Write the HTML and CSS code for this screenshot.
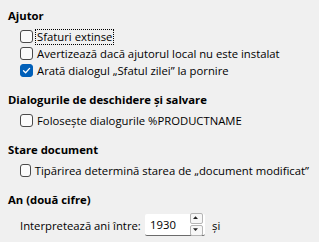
FILE: index.html
```html
<!DOCTYPE html>
<html lang="ro">
<head>
  <meta charset="UTF-8" />
  <title>Opțiuni - General</title>
  <link rel="stylesheet" href="styles.css">
</head>
<body>

  <section class="group">
    <h2 class="group-title">Ajutor</h2>
    <div class="options">
      <label class="check focused"><span class="box"></span><span class="text">Sfaturi extinse</span></label>
      <label class="check"><span class="box"></span><span class="text">Avertizează dacă ajutorul local nu este instalat</span></label>
      <label class="check"><span class="box checked"><svg viewBox="0 0 13 13" width="13" height="13"><path d="M3.5 6.8 L5.6 8.8 L9.6 4.4" fill="none" stroke="#fff" stroke-width="1.3" stroke-linecap="round" stroke-linejoin="round"/></svg></span><span class="text">Arată dialogul „Sfatul zilei” la pornire</span></label>
    </div>
  </section>

  <section class="group">
    <h2 class="group-title">Dialogurile de deschidere și salvare</h2>
    <div class="options">
      <label class="check"><span class="box"></span><span class="text">Folosește dialogurile %PRODUCTNAME</span></label>
    </div>
  </section>

  <section class="group">
    <h2 class="group-title">Stare document</h2>
    <div class="options">
      <label class="check"><span class="box"></span><span class="text">Tipărirea determină starea de „document modificat”</span></label>
    </div>
  </section>

  <section class="group">
    <h2 class="group-title">An (două cifre)</h2>
    <div class="year-row">
      <span class="year-label">Interpretează ani între:</span>
      <div class="spin">
        <span class="spin-value">1930</span>
        <div class="spin-buttons">
          <span class="spin-btn">
            <svg viewBox="0 0 11 9" width="11" height="9"><path d="M3 6 L5.5 3.2 L8 6 Z" fill="#222"/></svg>
          </span>
          <span class="spin-btn">
            <svg viewBox="0 0 11 9" width="11" height="9"><path d="M3 3.2 L5.5 6 L8 3.2 Z" fill="#222"/></svg>
          </span>
        </div>
      </div>
      <span class="year-and">și</span>
    </div>
  </section>

</body>
</html>
```

FILE: styles.css
```css
body, html {
  margin: 0;
  padding: 0;
  background: #f0f0f0;
  color: #000;
  font-family: "Open Sans", "Noto Sans", sans-serif;
  font-size: 11.3px;
  white-space: nowrap;
}

body {
  padding: 8px 8px 0 8px;
}

.group {
  margin-bottom: 13px;
}

.group-title {
  margin: 0;
  font-size: 11.3px;
  font-weight: bold;
  line-height: 16px;
}

.options {
  margin-top: 4px;
  padding-left: 12px;
  display: flex;
  flex-direction: column;
}

.check {
  display: flex;
  align-items: center;
  height: 17px;
  gap: 2px;
}

.box {
  width: 11px;
  height: 11px;
  border: 1px solid #4a4a4a;
  border-radius: 3px;
  background: #fbfbfb;
  display: flex;
}

.box.checked {
  background: #005fb8;
  border-color: #005fb8;
}

.box svg {
  margin: -1px;
}

.text {
  padding: 0 1px;
  line-height: 14px;
  border: 1px solid transparent;
}

.focused .text {
  border: 1px dotted #000;
}

.year-row {
  display: flex;
  align-items: center;
  padding-left: 12px;
  margin-top: 6px;
}

.year-label {
  width: 125px;
}

.spin {
  width: 60px;
  height: 21px;
  background: #fff;
  border-bottom: 1px solid #6b6b6b;
  border-radius: 2px;
  display: flex;
  align-items: center;
  justify-content: space-between;
}

.spin-value {
  padding-left: 5px;
}

.spin-buttons {
  display: flex;
  flex-direction: column;
  gap: 1px;
  margin-right: 2px;
}

.spin-btn {
  width: 11px;
  height: 9px;
  border: 1px solid #b5b5b5;
  border-radius: 2px;
  background: #f7f7f7;
  display: flex;
}

.spin-btn svg {
  margin: -1px 0 0 -1px;
}

.year-and {
  margin-left: 7px;
}
```
